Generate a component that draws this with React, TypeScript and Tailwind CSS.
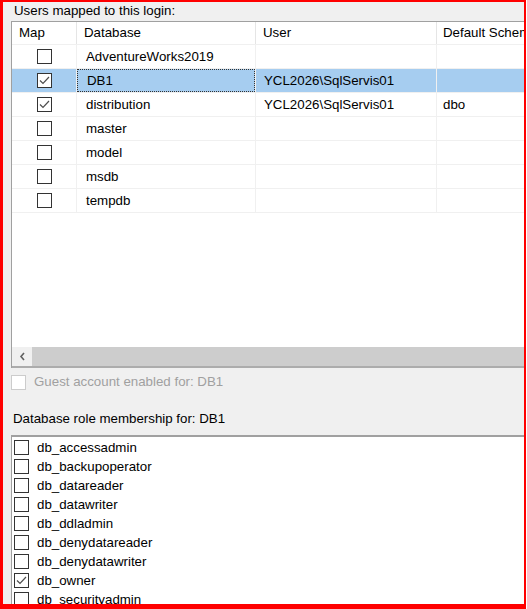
import React from "react";

type Row = { db: string; user: string; schema: string; mapped: boolean };

const rows: Row[] = [
  { db: "AdventureWorks2019", user: "", schema: "", mapped: false },
  { db: "DB1", user: "YCL2026\\SqlServis01", schema: "", mapped: true },
  { db: "distribution", user: "YCL2026\\SqlServis01", schema: "dbo", mapped: true },
  { db: "master", user: "", schema: "", mapped: false },
  { db: "model", user: "", schema: "", mapped: false },
  { db: "msdb", user: "", schema: "", mapped: false },
  { db: "tempdb", user: "", schema: "", mapped: false },
];

const roles = [
  { name: "db_accessadmin", on: false },
  { name: "db_backupoperator", on: false },
  { name: "db_datareader", on: false },
  { name: "db_datawriter", on: false },
  { name: "db_ddladmin", on: false },
  { name: "db_denydatareader", on: false },
  { name: "db_denydatawriter", on: false },
  { name: "db_owner", on: true },
  { name: "db_securityadmin", on: false },
];

function Check({ on, disabled }: { on: boolean; disabled?: boolean }) {
  return (
    <div
      className={
        "w-[15px] h-[15px] shrink-0 border bg-white flex items-center justify-center " +
        (disabled ? "border-[#cccccc]" : "border-[#333333]")
      }
    >
      {on && (
        <svg width="11" height="9" viewBox="0 0 11 9">
          <path d="M1 4.5 L4 7.5 L10 1" fill="none" stroke="#4d4d4d" strokeWidth="1.2" />
        </svg>
      )}
    </div>
  );
}

export default function App() {
  return (
    <div className="w-[527px] h-[609px] bg-white">
      <div
        className="w-[526px] h-[609px] border-l-[3px] border-t-2 border-r-2 border-b-[5px] border-[#ff0000] bg-[#f0f0f0] overflow-hidden text-[13.3px] text-black"
        style={{ fontFamily: '"Liberation Sans", Arial, sans-serif' }}
      >
        <div className="pl-[11px] h-[19px] pt-[1px] leading-[16px]">Users mapped to this login:</div>

        {/* grid */}
        <div className="ml-[8px] h-[347px] border-l border-t border-[#a0a0a0] bg-white flex flex-col">
          <div className="h-[23px] flex items-center border-b border-[#f0f0f0]">
            <div className="w-[65px] shrink-0 h-full pl-[7px] flex items-center border-r border-[#e5e5e5]">Map</div>
            <div className="w-[179px] shrink-0 h-full pl-[7px] flex items-center border-r border-[#e5e5e5]">Database</div>
            <div className="w-[181px] shrink-0 h-full pl-[7px] flex items-center border-r border-[#e5e5e5]">User</div>
            <div className="flex-1 h-full pl-[6px] flex items-center whitespace-nowrap overflow-hidden">Default Schema</div>
          </div>
          {rows.map((r) => {
            const sel = r.db === "DB1";
            return (
              <div
                key={r.db}
                className={"h-[24px] flex items-center border-b border-[#f0f0f0] " + (sel ? "bg-[#a6cdf0]" : "")}
              >
                <div className="w-[65px] shrink-0 h-full flex items-center justify-center border-r border-[#f0f0f0]">
                  <Check on={r.mapped} />
                </div>
                <div className="w-[179px] shrink-0 h-full flex items-center border-r border-[#f0f0f0]">
                  {sel ? (
                    <div className="w-full h-full pl-[9px] flex items-center border border-dotted border-[#333333]">
                      {r.db}
                    </div>
                  ) : (
                    <span className="pl-[9px]">{r.db}</span>
                  )}
                </div>
                <div className="w-[181px] shrink-0 h-full pl-[8px] flex items-center border-r border-[#f0f0f0]">{r.user}</div>
                <div className="flex-1 h-full pl-[6px] flex items-center">{r.schema}</div>
              </div>
            );
          })}
          <div className="flex-1" />
          {/* horizontal scrollbar */}
          <div className="h-[19px] flex border-b-2 border-[#acacac] box-content">
            <div className="w-[20px] h-full bg-[#f0f0f0] flex items-center justify-center">
              <svg width="7" height="9" viewBox="0 0 7 9">
                <path d="M5 1 L2 4.5 L5 8" fill="none" stroke="#606060" strokeWidth="1.6" />
              </svg>
            </div>
            <div className="flex-1 h-full bg-[#cdcdcd]" />
          </div>
        </div>

        {/* guest account */}
        <div className="h-[28px] pl-[8px] flex items-center gap-[8px] text-[#a0a0a0]">
          <Check on={false} disabled />
          <span>Guest account enabled for: DB1</span>
        </div>

        <div className="h-[39px] pl-[10px] pt-[14px] leading-[18px]">Database role membership for: DB1</div>

        {/* role list */}
        <div className="ml-[8px] h-[200px] border-l border-t-2 border-[#a0a0a0] bg-white pt-[1px]">
          {roles.map((r) => (
            <div key={r.name} className="h-[19px] pl-[2px] flex items-center gap-[8px]">
              <Check on={r.on} />
              <span>{r.name}</span>
            </div>
          ))}
        </div>
      </div>
    </div>
  );
}
